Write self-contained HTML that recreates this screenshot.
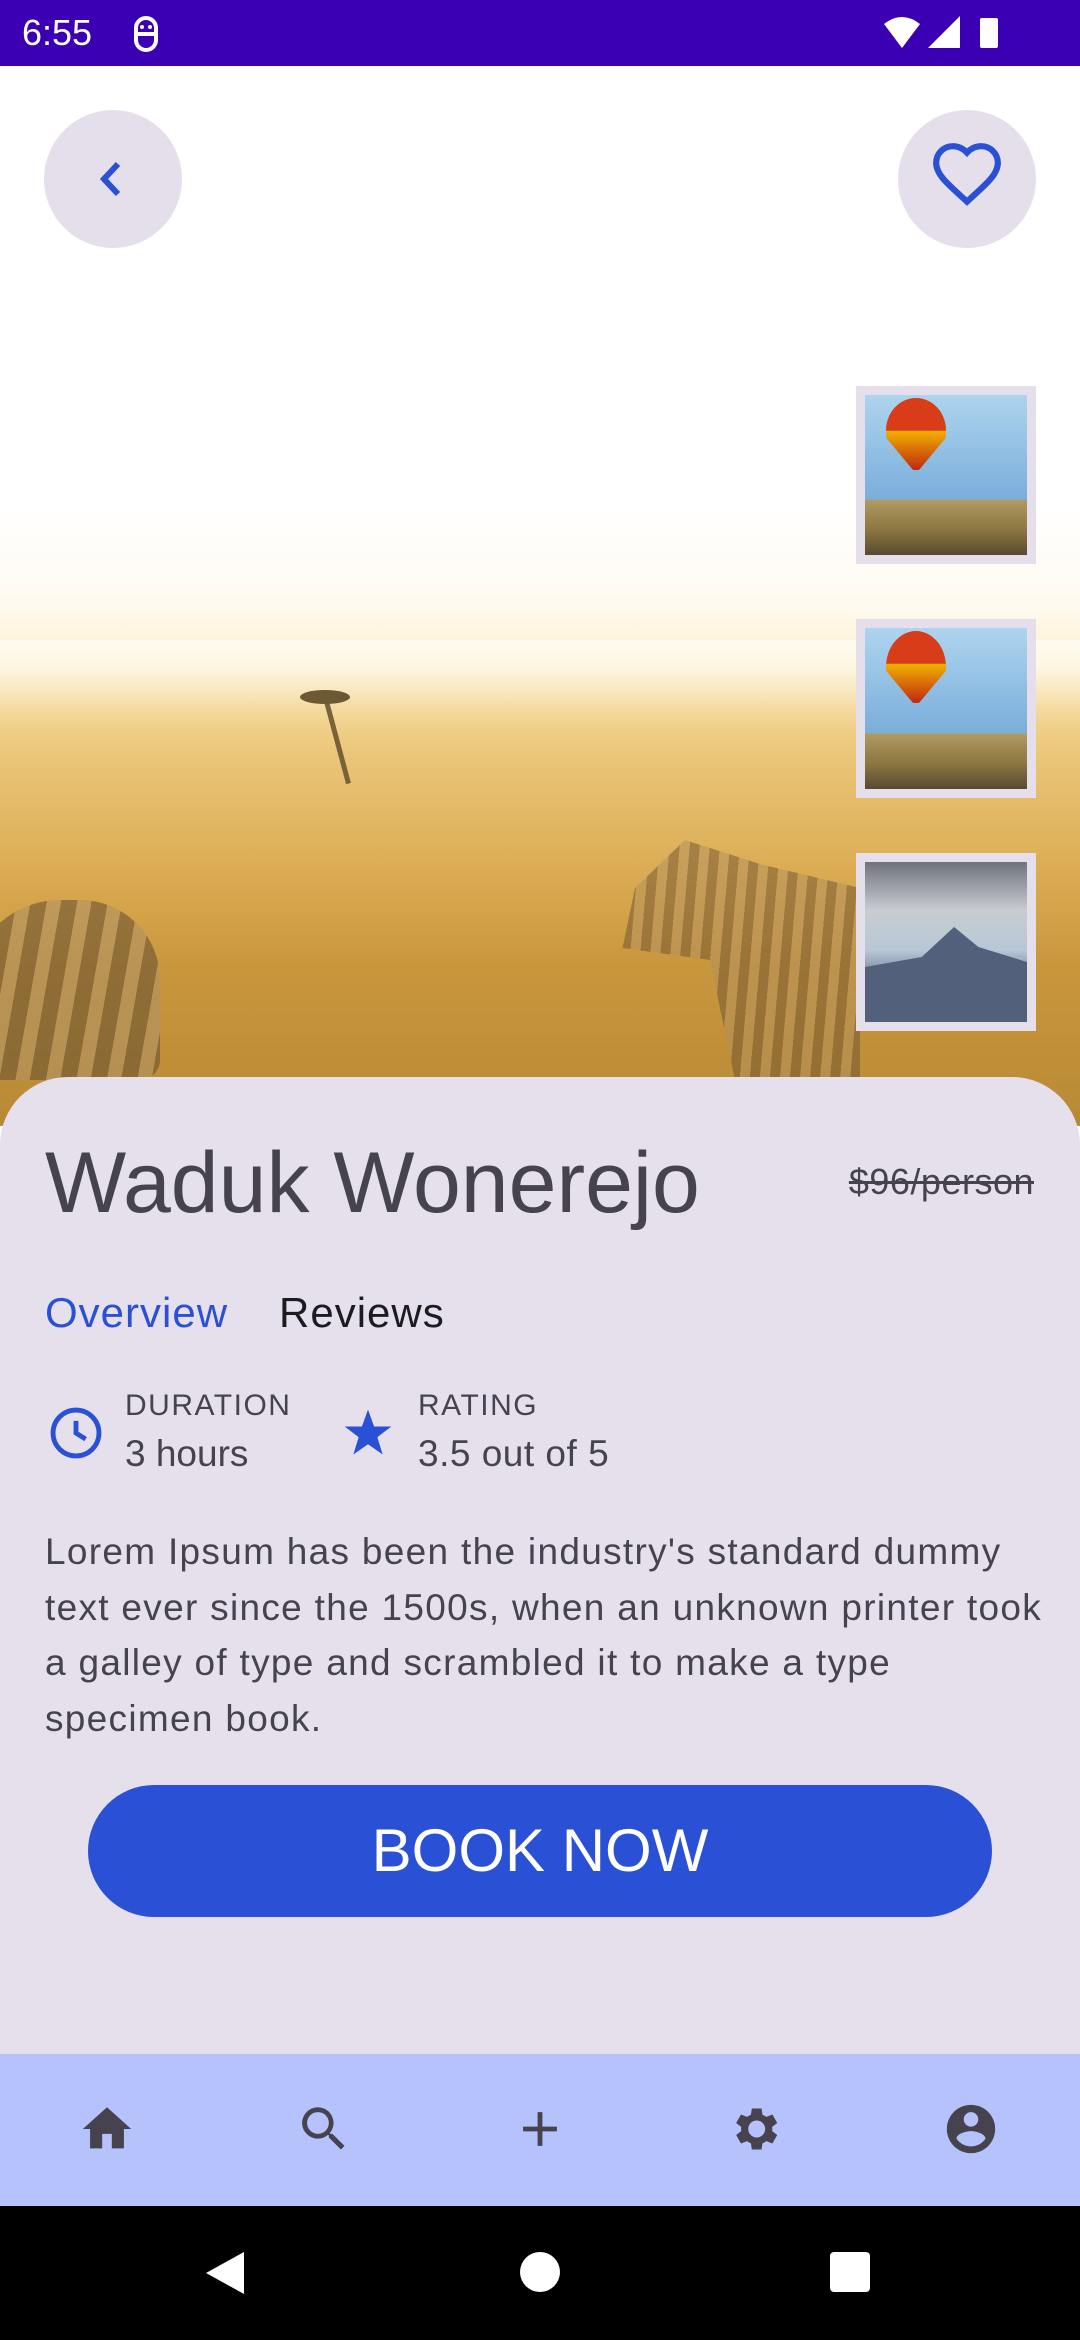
<!DOCTYPE html>
<html><head><meta charset="utf-8"><style>
*{margin:0;padding:0;box-sizing:border-box}
body{width:1080px;height:2340px;position:relative;overflow:hidden;background:#fff;font-family:"Liberation Sans",sans-serif}
.abs{position:absolute}
</style></head><body>
<!-- photo -->
<div class="abs" style="left:0;top:66px;width:1080px;height:1060px;background:linear-gradient(180deg,#fff 0px,#fff 440px,#fffaf0 540px,#fdf0cc 600px,#f3d592 640px,#e9c374 700px,#dcad55 800px,#c9963c 900px,#b88a36 1060px)"></div>
<div class="abs" style="left:0;top:640px;width:1080px;height:90px;background:linear-gradient(180deg,rgba(255,255,255,0.6),rgba(255,240,200,0))"></div>
<!-- zebras approximations -->
<div class="abs" style="left:-30px;top:900px;width:190px;height:180px;border-radius:90px 80px 20px 20px;background:repeating-linear-gradient(100deg,#6a5232 0 16px,#b09264 16px 30px);opacity:.6"></div>
<div class="abs" style="left:610px;top:840px;width:250px;height:240px;border-radius:80px 40px 0 0;background:repeating-linear-gradient(95deg,#6a5030 0 10px,#b09060 10px 20px);opacity:.5;clip-path:polygon(10% 20%,30% 0,60% 10%,100% 20%,100% 100%,50% 100%,40% 50%,5% 45%)"></div>
<div class="abs" style="left:335px;top:700px;width:5px;height:85px;background:#7a6238;transform:rotate(-15deg)"></div>
<div class="abs" style="left:300px;top:690px;width:50px;height:14px;border-radius:50%;background:#6c5832"></div>
<!-- status bar -->
<div class="abs" style="left:0;top:0;width:1080px;height:66px;background:#3b00b4;color:#fff;font-size:36px;line-height:66px;padding-left:22px">6:55</div>
<svg class="abs" style="left:130px;top:14px" width="32" height="38" viewBox="0 0 32 38"><path d="M6 14a10 10 0 0 1 20 0v12a10 10 0 0 1-20 0zM6 20h20" fill="none" stroke="#fff" stroke-width="4"/><circle cx="12" cy="13" r="2" fill="#fff"/><circle cx="20" cy="13" r="2" fill="#fff"/></svg>
<svg class="abs" style="left:882px;top:14px" width="130" height="38" viewBox="0 0 130 38"><path d="M2 10Q20-4 38 10L20 34Z" fill="#fff"/><path d="M46 34L78 2V34Z" fill="#fff"/><rect x="98" y="4" width="18" height="30" rx="2" fill="#fff"/></svg>
<!-- buttons -->
<div class="abs" style="left:44px;top:110px;width:138px;height:138px;border-radius:50%;background:#e5dfec"></div>
<svg class="abs" style="left:88px;top:155px" width="48" height="48" viewBox="0 0 48 48"><path d="M30 9L16 24l14 15" fill="none" stroke="#2a50d6" stroke-width="6"/></svg>
<div class="abs" style="left:898px;top:110px;width:138px;height:138px;border-radius:50%;background:#e5dfec"></div>
<svg class="abs" style="left:930px;top:140px" width="74" height="74" viewBox="0 0 24 24"><path d="M12 20l-1.4-1.3C5.4 14 2 11 2 7.4 2 4.4 4.4 2 7.4 2c1.7 0 3.4.8 4.6 2.1C13.2 2.8 14.9 2 16.6 2 19.6 2 22 4.4 22 7.4c0 3.6-3.4 6.6-8.6 11.3z" fill="none" stroke="#2a50d6" stroke-width="2"/></svg>
<!-- thumbnails -->
<div class="abs" style="left:856px;top:386px;width:180px;height:178px;background:#e5dfec;padding:9px">
 <div style="width:100%;height:100%;background:linear-gradient(180deg,#aed4ee 0,#7aaedb 65%,#b09a60 66%,#8a7440 85%,#574a30 100%);position:relative">
  <div class="abs" style="left:21px;top:3px;width:60px;height:72px;border-radius:50% 50% 50% 50%/45% 45% 55% 55%;background:linear-gradient(180deg,#d83c18 0,#d83c18 45%,#f0b000 46%,#c02810 100%);clip-path:polygon(0 0,100% 0,100% 55%,55% 100%,45% 100%,0 55%)"></div>
 </div></div>
<div class="abs" style="left:856px;top:619px;width:180px;height:179px;background:#e5dfec;padding:9px">
 <div style="width:100%;height:100%;background:linear-gradient(180deg,#aed4ee 0,#7aaedb 65%,#b09a60 66%,#8a7440 85%,#574a30 100%);position:relative">
  <div class="abs" style="left:21px;top:3px;width:60px;height:72px;background:linear-gradient(180deg,#d83c18 0,#d83c18 45%,#f0b000 46%,#c02810 100%);border-radius:50%;clip-path:polygon(0 0,100% 0,100% 55%,55% 100%,45% 100%,0 55%)"></div>
 </div></div>
<div class="abs" style="left:856px;top:853px;width:180px;height:178px;background:#e5dfec;padding:9px">
 <div style="width:100%;height:100%;background:linear-gradient(180deg,#6e737c 0,#c8ccd0 30%,#b8c8d6 55%,#7c8aa2 70%,#4e5a74 100%);position:relative;overflow:hidden">
  <div class="abs" style="left:0;top:60px;width:162px;height:100px;background:#53607c;clip-path:polygon(0 45%,35% 35%,55% 5%,70% 25%,100% 40%,100% 100%,0 100%)"></div>
 </div></div>
<!-- sheet -->
<div class="abs" style="left:0;top:1077px;width:1080px;height:1000px;background:#e6e0ec;border-radius:68px 68px 0 0"></div>
<div class="abs" style="left:45px;top:1128px;font-size:86px;color:#46434f;line-height:110px">Waduk Wonerejo</div>
<div class="abs" style="right:46px;top:1160px;font-size:36px;color:#46434f;text-decoration:line-through;line-height:44px;letter-spacing:0.5px">$96/person</div>
<div class="abs" style="left:45px;top:1288px;font-size:42px;color:#2a50d6;letter-spacing:1px;line-height:50px">Overview</div>
<div class="abs" style="left:279px;top:1288px;font-size:42px;color:#1c1b1f;letter-spacing:1px;line-height:50px">Reviews</div>
<svg class="abs" style="left:47px;top:1404px" width="58" height="58" viewBox="0 0 24 24"><circle cx="12" cy="12" r="9.5" fill="none" stroke="#2a50d6" stroke-width="2"/><path d="M12 7v5l4 2.5" fill="none" stroke="#2a50d6" stroke-width="2"/></svg>
<div class="abs" style="left:125px;top:1388px;font-size:30px;color:#46434f;letter-spacing:1.5px;line-height:36px">DURATION</div>
<div class="abs" style="left:125px;top:1432px;font-size:37px;color:#46434f;line-height:44px">3 hours</div>
<svg class="abs" style="left:340px;top:1405px" width="56" height="56" viewBox="0 0 24 24"><path d="M12 2l2.6 7.2H22l-6 4.6 2.3 7.4L12 16.8 5.7 21.2 8 13.8 2 9.2h7.4z" fill="#2a50d6"/></svg>
<div class="abs" style="left:418px;top:1388px;font-size:30px;color:#46434f;letter-spacing:1.5px;line-height:36px">RATING</div>
<div class="abs" style="left:418px;top:1432px;font-size:37px;color:#46434f;line-height:44px;letter-spacing:0.5px">3.5 out of 5</div>
<div class="abs" style="left:45px;top:1524px;width:1030px;font-size:37px;color:#46434f;line-height:55.5px;letter-spacing:1.3px;white-space:nowrap">Lorem Ipsum has been the industry's standard dummy<br>text ever since the 1500s, when an unknown printer took<br>a galley of type and scrambled it to make a type<br>specimen book.</div>
<div class="abs" style="left:88px;top:1785px;width:904px;height:132px;border-radius:66px;background:#2a50d6;color:#fff;font-size:60px;text-align:center;line-height:132px">BOOK NOW</div>
<!-- bottom nav -->
<div class="abs" style="left:0;top:2054px;width:1080px;height:152px;background:#b6c2fc"></div>
<svg class="abs" style="left:78px;top:2100px" width="58" height="58" viewBox="0 0 24 24"><path d="M10 20v-6h4v6h5v-8h3L12 3 2 12h3v8z" fill="#46434f"/></svg>
<svg class="abs" style="left:295px;top:2100px" width="58" height="58" viewBox="0 0 24 24"><path d="M15.5 14h-.8l-.3-.3A6.5 6.5 0 1 0 9.5 16c1.6 0 3.1-.6 4.2-1.6l.3.3v.8l5 5 1.5-1.5zm-6 0a4.5 4.5 0 1 1 0-9 4.5 4.5 0 0 1 0 9z" fill="#46434f"/></svg>
<svg class="abs" style="left:511px;top:2100px" width="58" height="58" viewBox="0 0 24 24"><path d="M19 13h-6v6h-2v-6H5v-2h6V5h2v6h6z" fill="#46434f"/></svg>
<svg class="abs" style="left:726px;top:2100px" width="58" height="58" viewBox="0 0 24 24"><path d="M19.1 12.9a7 7 0 0 0 0-1.8l2.1-1.6-2-3.5-2.5 1a7 7 0 0 0-1.6-.9L14.7 3.5h-4l-.4 2.6a7 7 0 0 0-1.6.9l-2.5-1-2 3.5 2.1 1.6a7 7 0 0 0 0 1.8l-2.1 1.6 2 3.5 2.5-1c.5.4 1 .7 1.6.9l.4 2.6h4l.4-2.6c.6-.2 1.1-.5 1.6-.9l2.5 1 2-3.5zM12.7 15.5a3.5 3.5 0 1 1 0-7 3.5 3.5 0 0 1 0 7z" fill="#46434f"/></svg>
<svg class="abs" style="left:942px;top:2100px" width="58" height="58" viewBox="0 0 24 24"><path d="M12 2a10 10 0 1 0 0 20 10 10 0 0 0 0-20zm0 3a3 3 0 1 1 0 6 3 3 0 0 1 0-6zm0 14.2a7.2 7.2 0 0 1-6-3.2c0-2 4-3.1 6-3.1s6 1.1 6 3.1a7.2 7.2 0 0 1-6 3.2z" fill="#46434f"/></svg>
<!-- system nav -->
<div class="abs" style="left:0;top:2206px;width:1080px;height:134px;background:#000"></div>
<svg class="abs" style="left:204px;top:2250px" width="44" height="46" viewBox="0 0 44 46"><path d="M40 2V44L2 23Z" fill="#fff"/></svg>
<div class="abs" style="left:520px;top:2252px;width:40px;height:40px;border-radius:50%;background:#fff"></div>
<div class="abs" style="left:830px;top:2252px;width:40px;height:40px;border-radius:4px;background:#fff"></div>
</body></html>
